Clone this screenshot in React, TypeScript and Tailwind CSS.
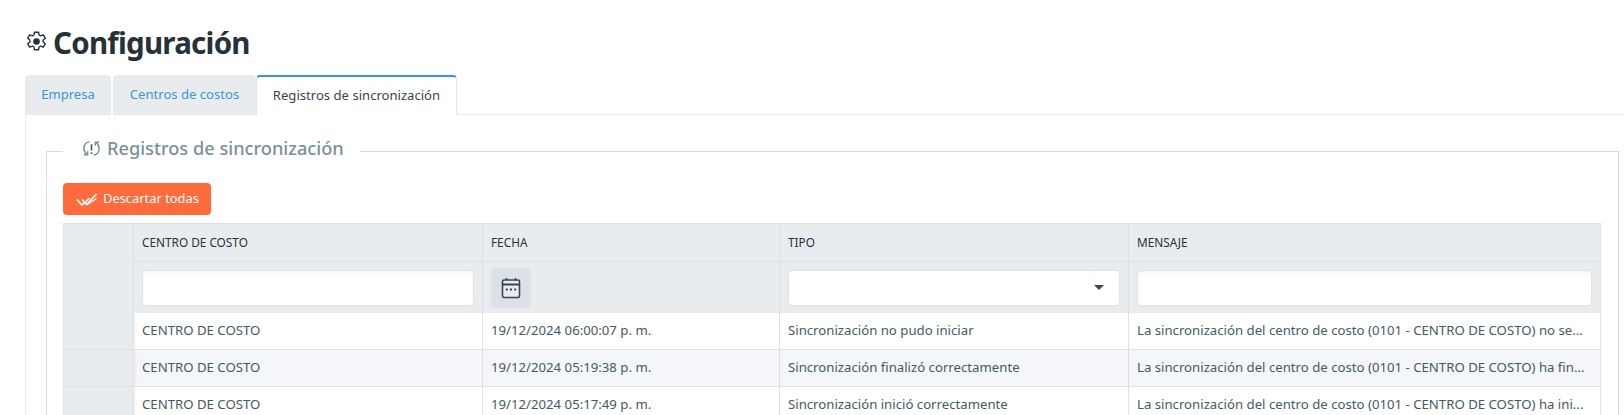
import React from 'react';

const COLS = 'grid grid-cols-[70px_349px_297px_349px_1fr]';

const rows = [
  {
    fecha: '19/12/2024 06:00:07 p. m.',
    tipo: 'Sincronización no pudo iniciar',
    mensaje: 'La sincronización del centro de costo (0101 - CENTRO DE COSTO) no se...',
  },
  {
    fecha: '19/12/2024 05:19:38 p. m.',
    tipo: 'Sincronización finalizó correctamente',
    mensaje: 'La sincronización del centro de costo (0101 - CENTRO DE COSTO) ha fin...',
  },
  {
    fecha: '19/12/2024 05:17:49 p. m.',
    tipo: 'Sincronización inició correctamente',
    mensaje: 'La sincronización del centro de costo (0101 - CENTRO DE COSTO) ha ini...',
  },
];

const GearIcon = () => (
  <svg width="21" height="21" viewBox="0 0 21 21" fill="none" stroke="#263238" strokeWidth="1.400" strokeLinejoin="round" className="mb-[4px] -ml-[1px] shrink-0">
    <path d="M8.500 1.200h4l.6 2.800 1.500.8 2.700-1 2 3.400-2.100 1.900v1.800l2.100 1.900-2 3.400-2.700-1-1.500.8-.6 2.800h-4l-.6-2.800-1.500-.8-2.700 1-2-3.400 2.100-1.900V9.100L1.700 7.200l2-3.400 2.700 1 1.500-.8z" />
    <circle cx="10.500" cy="10.500" r="2.600" fill="#263238" />
  </svg>
);

const SyncAlertIcon = () => (
  <svg width="19" height="19" viewBox="0 0 20 20" fill="none" stroke="#78909c" strokeWidth="1.500" className="shrink-0">
    <path d="M8 3C4 3.500 2 6.500 2 10c0 2.500 1 4.500 3 6" />
    <path d="M2 16.500h4V13" />
    <path d="M12 17c4-.5 6-3.500 6-7 0-2.500-1-4.500-3-6" />
    <path d="M18 3.500h-4V7" />
    <path d="M10 5.500v6.500M10 14v1.800" stroke="#455a64" strokeWidth="1.700" />
  </svg>
);

const DoubleCheckIcon = () => (
  <svg width="21" height="13" viewBox="0 0 21 13" fill="none" stroke="#fff" strokeWidth="1.600" className="shrink-0">
    <path d="M1 6.500l5 5.500 7.500-7" />
    <path d="M6 6.500l4.500 5L20.500 1" />
    <path d="M10.500 12 20.500 5.500" strokeWidth="1.200" />
  </svg>
);

const CalendarIcon = () => (
  <svg width="20" height="22" viewBox="0 0 20 22" fill="none" stroke="#37474f" strokeWidth="1.600">
    <rect x="1.500" y="3" width="17" height="17.500" rx="1.500" fill="#e9ecef" />
    <path d="M1.500 7.500h17" strokeWidth="2" />
    <path d="M5.500 1v2.500M14.500 1v2.500" />
    <path d="M4.800 12.500h2M9 12.500h2M13.200 12.500h2" strokeWidth="1.800" />
  </svg>
);

const TextFilter = () => (
  <input
    type="text"
    className="block w-full h-[36px] bg-white border border-[#dfe3e7] rounded-[4px] shadow-[inset_0_3px_4px_rgba(0,0,0,0.03)] outline-none"
  />
);

export default function App() {
  return (
    <div className="h-[415px] overflow-hidden bg-white text-[#455a64] font-['Noto_Sans','Open_Sans',sans-serif] text-[13.200px] pt-[27px] pl-[25px]">
      <h1 className="flex items-center gap-[6px] h-[32px] pl-[2px] text-[#263238] text-[29.500px] leading-[32px] font-bold tracking-[-0.75px]">
        <GearIcon />
        Configuración
      </h1>

      {/* Tabs */}
      <div className="flex mt-[16px] h-[40px] border-b border-[#e9ebee] text-[13.100px]">
        <a className="h-[40px] w-[86px] mr-[2px] flex items-center justify-center bg-[#e9ecef] text-[#3b97d3] rounded-t-[4px]">Empresa</a>
        <a className="h-[40px] w-[143px] flex items-center justify-center bg-[#e9ecef] text-[#3b97d3] rounded-t-[4px]">Centros de costos</a>
        <a className="h-[40px] w-[201px] flex items-center justify-center bg-white text-[#37474f] border-t-2 border-x border-t-[#3498db] border-x-[#e4e7ea] rounded-t-[4px]">Registros de sincronización</a>
      </div>

      {/* Tab panel */}
      <div className="border-l border-[#e9ebee] pl-[20px] pr-[5px] pt-[23px]">
        <fieldset className="border border-[#d8dde2] h-[320px] pl-[16px] pr-[17px]">
          <legend className="px-[19px] pr-[16px] pb-[6px] flex items-center gap-[6px] text-[#78909c] text-[18.200px] leading-[20px] font-medium h-[26px]">
            <SyncAlertIcon />
            Registros de sincronización
          </legend>

          <button className="mt-[19px] flex items-center gap-[6px] h-[32px] w-[148px] pl-[13px] bg-[#ff6b3d] text-white text-[12.900px] rounded-[4px]">
            <DoubleCheckIcon />
            Descartar todas
          </button>

          {/* Table */}
          <div className="mt-[8px] border border-[#dde1e5]">
            <div className={COLS}>
              <div className="row-span-2 bg-[#e9ecef] border-r border-[#dde1e5]" />
              {['CENTRO DE COSTO', 'FECHA', 'TIPO', 'MENSAJE'].map((h, i) => (
                <div
                  key={h}
                  className={`h-[38px] flex items-center px-[8px] bg-[#e9ecef] border-b border-[#dde1e5] text-[11.800px] font-normal text-[#263238] ${i < 3 ? 'border-r' : ''}`}
                >
                  {h}
                </div>
              ))}
              <div className="h-[51px] flex items-center px-[8px] bg-[#e9ecef] border-r border-[#dde1e5]">
                <TextFilter />
              </div>
              <div className="h-[51px] flex items-center px-[8px] bg-[#e9ecef] border-r border-[#dde1e5]">
                <div className="w-[40px] h-[40px] flex items-center justify-center bg-[#dde1e5] rounded-[5px]">
                  <CalendarIcon />
                </div>
              </div>
              <div className="h-[51px] flex items-center px-[8px] bg-[#e9ecef] border-r border-[#dde1e5]">
                <div className="w-full h-[36px] flex items-center justify-end pr-[15px] bg-white border border-[#dfe3e7] rounded-[4px]">
                  <span className="w-0 h-0 border-x-[5px] border-x-transparent border-t-[5px] border-t-[#37474f]" />
                </div>
              </div>
              <div className="h-[51px] flex items-center px-[8px] bg-[#e9ecef]">
                <TextFilter />
              </div>
            </div>

            {rows.map((row, i) => (
              <div key={row.fecha} className={`${COLS} h-[37px] border-b border-[#dde1e5] ${i === 1 ? 'bg-[#f4f6fa]' : 'bg-white'}`}>
                <div className="bg-[#e9ecef] border-r border-[#dde1e5]" />
                <div className="flex items-center px-[8px] border-r border-[#dde1e5] whitespace-nowrap shadow-[inset_4px_0_4px_-3px_rgba(0,0,0,0.05)]">CENTRO DE COSTO</div>
                <div className="flex items-center px-[8px] border-r border-[#dde1e5] whitespace-nowrap">{row.fecha}</div>
                <div className="flex items-center px-[8px] border-r border-[#dde1e5] whitespace-nowrap">{row.tipo}</div>
                <div className="flex items-center px-[8px] whitespace-nowrap overflow-hidden">{row.mensaje}</div>
              </div>
            ))}
          </div>
        </fieldset>
      </div>
    </div>
  );
}
